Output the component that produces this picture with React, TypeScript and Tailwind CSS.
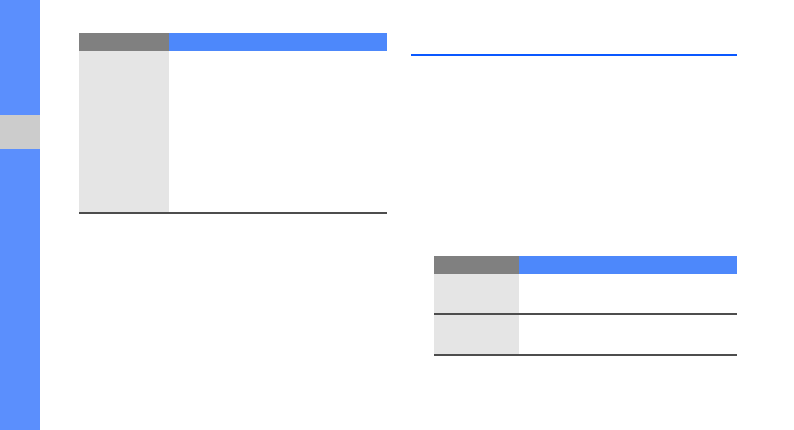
import React from "react";

function Table({ rows, narrow }: { rows: number[]; narrow?: boolean }) {
  const col = narrow ? "w-[85px]" : "w-[90px]";
  return (
    <div className="w-full">
      <div className="flex h-[18px]">
        <div className={`${col} bg-[#808080]`} />
        <div className="flex-1 bg-[#4d88fb]" />
      </div>
      {rows.map((h, i) => (
        <div key={i} className="flex border-b-2 border-[#4d4d4d]" style={{ height: h }}>
          <div className={`${col} bg-[#e5e5e5]`} />
          <div className="flex-1 bg-white" />
        </div>
      ))}
    </div>
  );
}

export default function App() {
  return (
    <div className="flex w-[794px] h-[430px] bg-white font-['Liberation_Sans',sans-serif]">
      <aside className="w-[40px] h-full bg-[#5b8ffd] flex flex-col">
        <div className="mt-[115px] h-[34px] bg-[#cccccc]" />
      </aside>
      <main className="flex gap-[24px] pl-[39px]">
        <section className="w-[308px] pt-[33px]">
          <Table rows={[163]} />
        </section>
        <section className="w-[326px] pt-[54px]">
          <div className="h-[1.5px] bg-[#0a58ff]" />
          <div className="ml-[23px] mt-[200.5px]">
            <Table rows={[41, 41]} narrow />
          </div>
        </section>
      </main>
    </div>
  );
}
